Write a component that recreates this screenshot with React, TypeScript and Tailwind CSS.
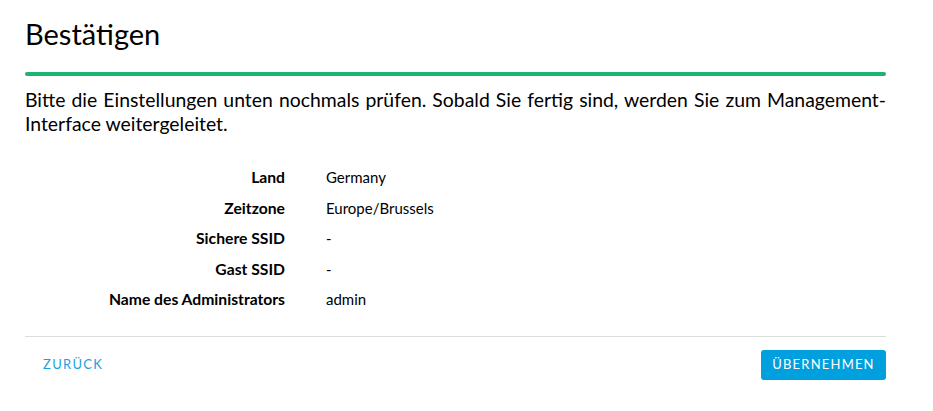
import React from "react";

const rows: { label: string; value: string }[] = [
  { label: "Land", value: "Germany" },
  { label: "Zeitzone", value: "Europe/Brussels" },
  { label: "Sichere SSID", value: "-" },
  { label: "Gast SSID", value: "-" },
  { label: "Name des Administrators", value: "admin" },
];

export default function App() {
  return (
    <div className="w-[933px] h-[411px] bg-white font-['Lato','Liberation_Sans',sans-serif] text-black">
      <div className="w-[861px] ml-[25px] pt-[17px]">
        <h1 className="text-[29px] leading-[34px] font-normal">Bestätigen</h1>

        <div className="mt-[21px] h-[4px] rounded-full bg-[#1bb470]" />

        <p className="mt-[12px] text-[19.4px] leading-[23.5px] text-justify">
          Bitte die Einstellungen unten nochmals prüfen. Sobald Sie fertig sind, werden Sie zum
          Management-Interface weitergeleitet.
        </p>

        {/* Summary table */}
        <div className="mt-[33px] flex flex-col gap-[12.5px] text-[15px] leading-[18px]">
          {rows.map((row) => (
            <div key={row.label} className="flex items-baseline">
              <div className="w-[260px] text-right text-[15.7px] font-bold">{row.label}</div>
              <div className="ml-[41px]">{row.value}</div>
            </div>
          ))}
        </div>

        <div className="mt-[28px] h-px bg-[#dddddd]" />

        <div className="mt-[13px] flex items-center justify-between">
          <button className="ml-[18px] text-[13px] tracking-[1.3px] text-[#1a9fe0] uppercase">
            Zurück
          </button>
          <button className="h-[30px] w-[125px] rounded-[3px] bg-[#009fdd] text-[13px] tracking-[1.2px] text-white uppercase">
            Übernehmen
          </button>
        </div>
      </div>
    </div>
  );
}
